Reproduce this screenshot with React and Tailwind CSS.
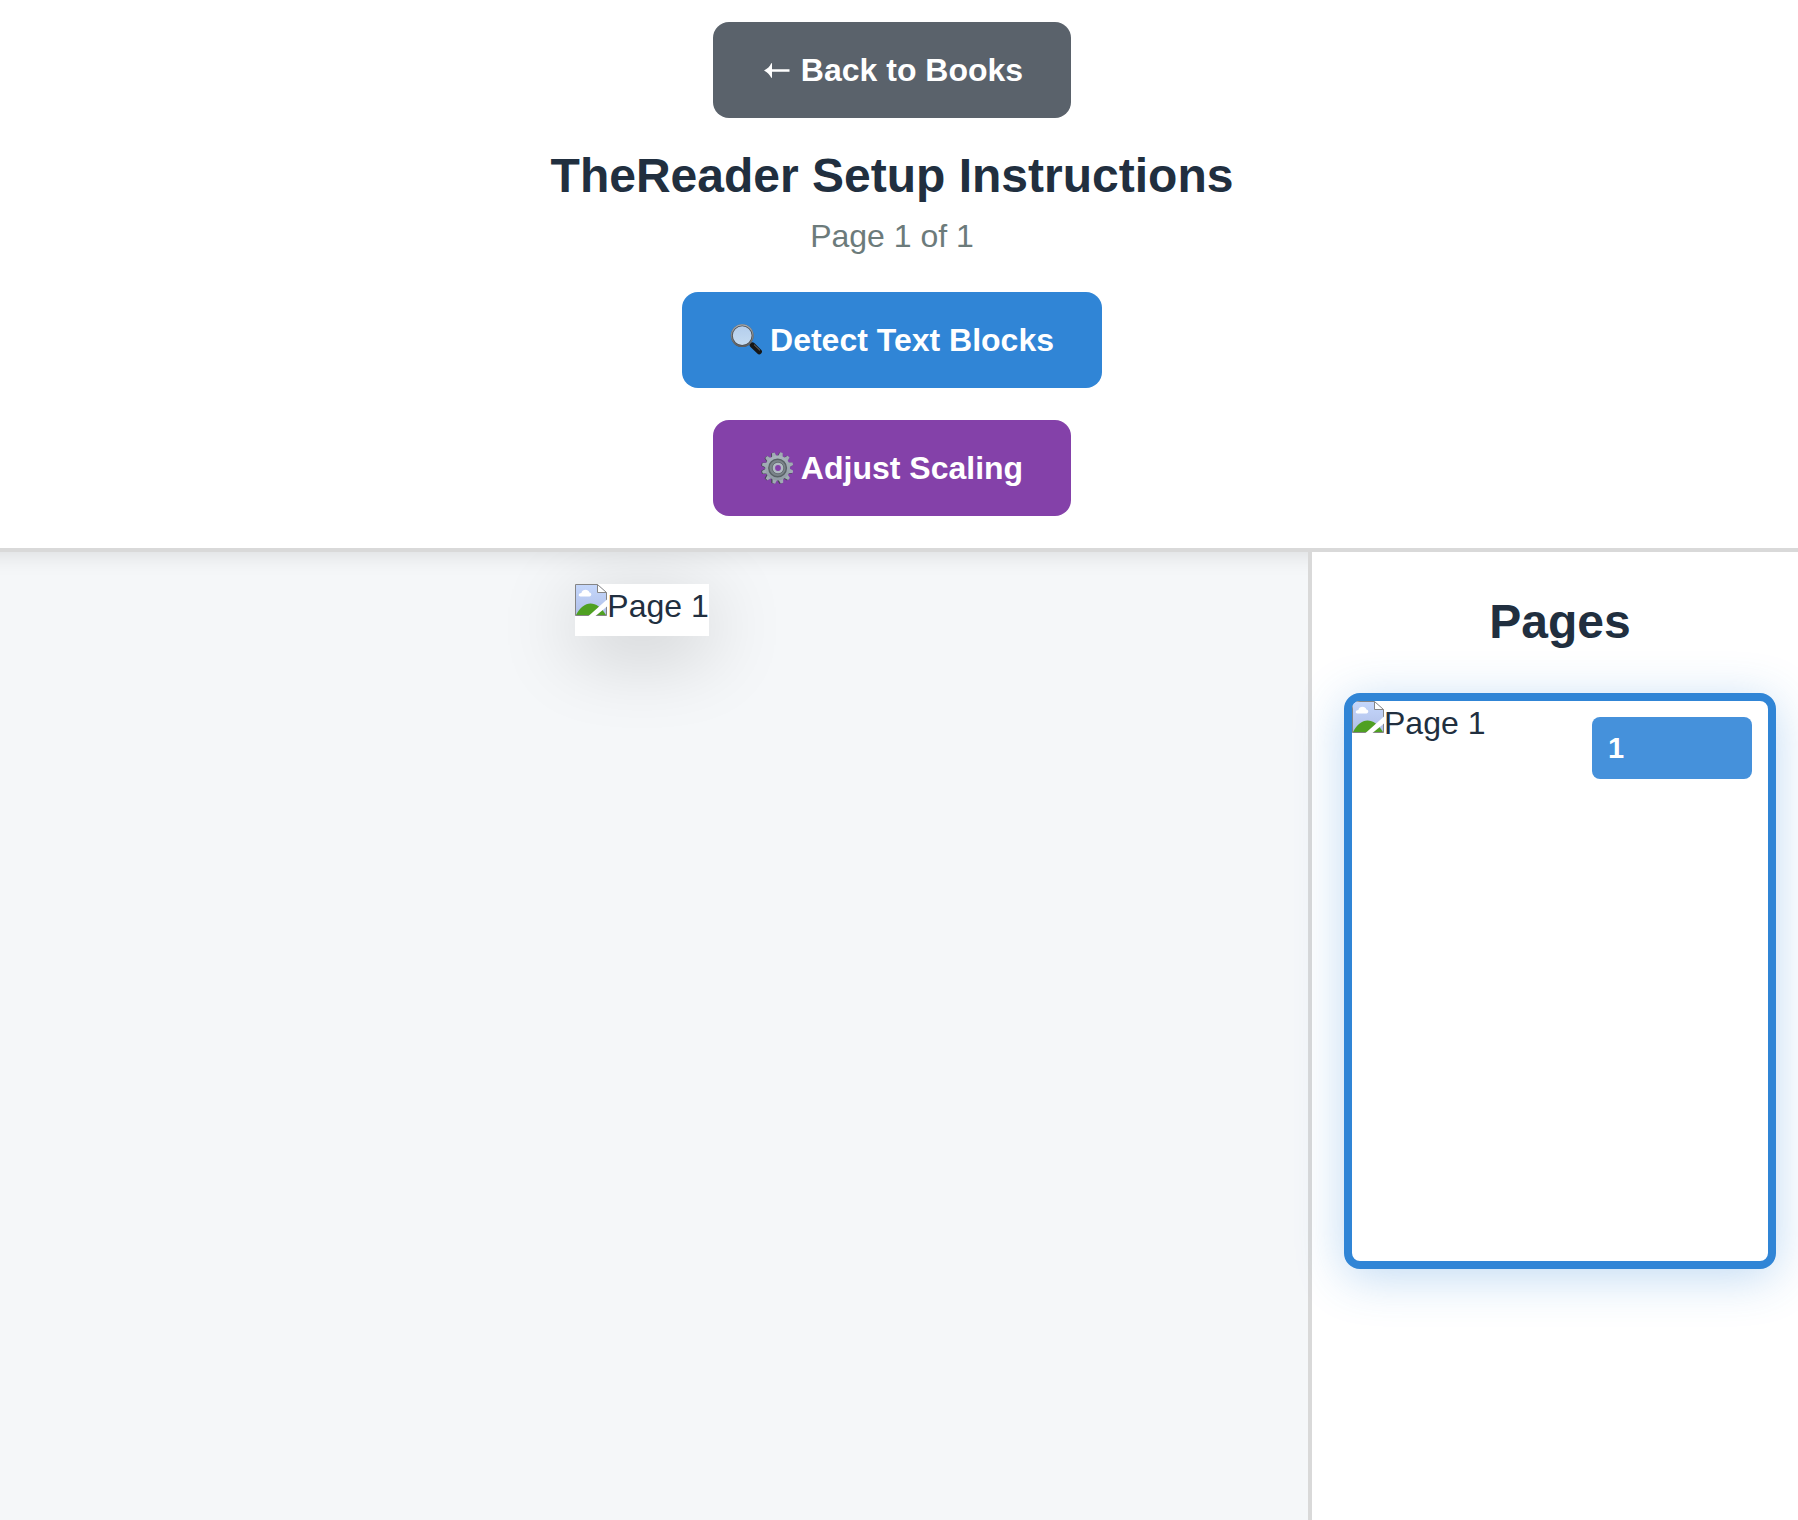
function ArrowLeftIcon() {
  return (
    <svg viewBox="0 0 32 32" className="h-8 w-8 shrink-0" aria-hidden="true">
      <path d="M3 16.5C6.4 14.8 9 12.2 10.2 9.2H11V15.3H28.5V17.7H11V23.8H10.2C9 20.8 6.4 18.2 3 16.5z" fill="#fff" />
    </svg>
  );
}

function MagnifierIcon() {
  return (
    <svg viewBox="0 0 32 32" className="h-8 w-8 shrink-0" aria-hidden="true">
      <defs>
        <linearGradient id="lens" x1="0" y1="0" x2="0" y2="1">
          <stop offset="0" stopColor="#b3cdec" />
          <stop offset="1" stopColor="#c5dcf2" />
        </linearGradient>
        <linearGradient id="rim" x1="0" y1="0" x2="0" y2="1">
          <stop offset="0" stopColor="#a4a9ae" />
          <stop offset="1" stopColor="#5c5f62" />
        </linearGradient>
      </defs>
      <path d="M19.5 18.5 23 22" stroke="#777" strokeWidth="2.6" />
      <path d="M22.4 21 29.2 27.6" stroke="#161616" strokeWidth="5.4" strokeLinecap="round" />
      <path d="M24.4 21 29.6 26" stroke="#777" strokeWidth="1" strokeLinecap="round" />
      <circle cx="12.2" cy="11.6" r="10.4" fill="url(#lens)" stroke="#4d4f52" strokeWidth="2" />
      <circle cx="12.2" cy="11.6" r="10.8" fill="none" stroke="url(#rim)" strokeWidth="1.2" />
    </svg>
  );
}

const TEETH = [0, 1, 2, 3, 4, 5, 6, 7, 8, 9, 10, 11];

function GearIcon() {
  return (
    <svg viewBox="0 0 32 32" className="h-8 w-8 shrink-0" aria-hidden="true">
      <defs>
        <linearGradient id="gear" x1="0" y1="0" x2="0" y2="1">
          <stop offset="0" stopColor="#a9b4bd" />
          <stop offset="1" stopColor="#909aa3" />
        </linearGradient>
      </defs>
      <g transform="translate(-0.2 0.2)" fill="#454b50">
        {TEETH.map((n) => (
          <path key={n} d="M13.2 6 14.6 0.2h3.2L19.2 6z" transform={`rotate(${n * 30 + 14} 16 16)`} />
        ))}
      </g>
      <g transform="translate(0.6 0)">
        <g fill="#a0abb4">
          {TEETH.map((n) => (
            <path key={n} d="M13.2 6 14.7 0.2h2.6L18.8 6z" transform={`rotate(${n * 30 + 14} 16 16)`} />
          ))}
        </g>
        <circle cx="16" cy="16" r="12.4" fill="url(#gear)" />
        <circle cx="16" cy="16" r="8.8" fill="#7b848a" stroke="#596166" strokeWidth="1.4" />
        <circle cx="16.4" cy="16" r="4.2" fill="#8441a9" stroke="#b1bac2" strokeWidth="2.6" />
        <circle cx="16.4" cy="16" r="5.8" fill="none" stroke="#5c6468" strokeWidth="0.7" />
      </g>
    </svg>
  );
}

function BrokenImageIcon() {
  return (
    <svg viewBox="0 0 32 32" className="h-8 w-8 shrink-0" aria-hidden="true">
      <defs>
        <linearGradient id="sky" x1="0" y1="0" x2="0" y2="1">
          <stop offset="0" stopColor="#c5d7fb" />
          <stop offset="1" stopColor="#b0bfe8" />
        </linearGradient>
      </defs>
      <path d="M.5 .5H22.5L31.5 8.5V31.5H.5z" fill="url(#sky)" />
      <path d="M1 31C5 23.5 10 19.5 15.5 19.5S26 23 31 31z" fill="#4fa022" />
      <path d="M5.5 12.5C3 12.5 3.2 9 6.4 9 7 5 13.5 4.6 14.4 8.6 17 8.8 16.8 12.5 14.5 12.5z" fill="#fff" />
      <path d="M22.5 .5H.5V31.5H31.5V8.5" fill="none" stroke="#858585" />
      <path d="M22.5 .5V8.5H31.5z" fill="#fff" stroke="#858585" />
      <path d="M13.5 32 32 15.5V22.5L20.5 32z" fill="#fff" />
    </svg>
  );
}

function MissingPage({ label }) {
  return (
    <span className="flex items-start">
      <BrokenImageIcon />
      <span className="leading-11">{label}</span>
    </span>
  );
}

function ActionButton({ color, icon, children }) {
  return (
    <button
      type="button"
      className={`flex h-24 cursor-pointer items-center gap-2 rounded-2xl px-12 font-bold text-white ${color}`}
    >
      {icon}
      <span>{children}</span>
    </button>
  );
}

export default function App() {
  return (
    <div className="flex min-h-screen flex-col bg-white font-['Liberation_Sans',Arial,sans-serif] text-[32px] text-[#212f3f]">
      <header className="z-10 flex flex-col items-center border-b-4 border-[#d9d9d9] bg-white pt-[22px] pr-[14px] pb-8 shadow-[0_-16px_20px_20px_rgba(0,0,0,0.1)]">
        <ActionButton color="bg-[#5a626b]" icon={<ArrowLeftIcon />}>
          Back to Books
        </ActionButton>
        <h1 className="mt-6 text-5xl leading-[68px] font-bold">TheReader Setup Instructions</h1>
        <p className="leading-[52px] text-[#6c7b7b]">Page 1 of 1</p>
        <div className="mt-[30px] flex flex-col items-center gap-8">
          <ActionButton color="bg-[#3085d6]" icon={<MagnifierIcon />}>
            Detect Text Blocks
          </ActionButton>
          <ActionButton color="bg-[#8441a9]" icon={<GearIcon />}>
            Adjust Scaling
          </ActionButton>
        </div>
      </header>
      <div className="flex flex-1">
        <main className="flex flex-1 items-start justify-center bg-[#f5f7f9] pt-8 pr-6">
          <div className="min-h-[52px] bg-white shadow-[0_16px_80px_rgba(0,0,0,0.2)]">
            <MissingPage label="Page 1" />
          </div>
        </main>
        <aside className="z-20 w-[490px] shrink-0 border-l-4 border-[#d9d9d9] bg-white pt-8 pr-[22px] pl-8">
          <h2 className="mb-[33px] text-center text-5xl leading-[76px] font-bold">Pages</h2>
          <button
            type="button"
            className="relative flex aspect-[3/4] w-full cursor-pointer items-start overflow-hidden rounded-2xl border-8 border-[#3085d6] bg-white shadow-[0_8px_48px_rgba(48,133,214,0.3)]"
          >
            <MissingPage label="Page 1" />
            <span className="absolute top-4 right-4 w-40 rounded-lg bg-[#4591db] px-4 py-2 text-left text-[29px] leading-[46px] font-bold text-white">
              1
            </span>
          </button>
        </aside>
      </div>
    </div>
  );
}
